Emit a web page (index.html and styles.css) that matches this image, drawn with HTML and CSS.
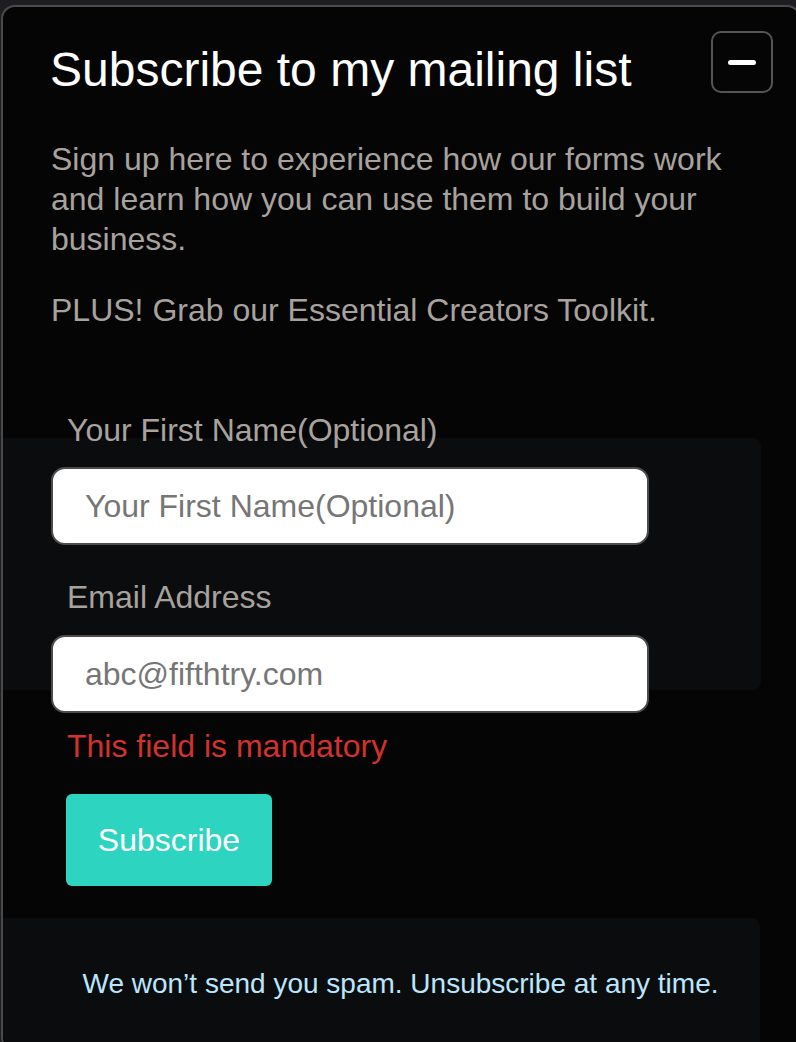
FILE: index.html
```html
<!DOCTYPE html>
<html lang="en">
<head>
<meta charset="utf-8">
<title>Subscribe</title>
<link rel="stylesheet" href="styles.css">
</head>
<body>
<section class="card">
  <header class="head">
    <h1 class="title">Subscribe to my mailing list</h1>
    <button class="close" type="button" aria-label="Minimize"><span class="bar"></span></button>
  </header>
  <p class="text">Sign up here to experience how our forms work and learn how you can use them to build your business.</p>
  <p class="text">PLUS! Grab our Essential Creators Toolkit.</p>
  <form class="form">
    <div class="fields">
      <label class="label" for="fname">Your First Name(Optional)</label>
      <input class="input" id="fname" type="text" placeholder="Your First Name(Optional)">
      <label class="label label-2" for="email">Email Address</label>
      <input class="input input-2" id="email" type="email" placeholder="abc@fifthtry.com">
    </div>
    <div class="error">This field is mandatory</div>
    <button class="submit" type="button">Subscribe</button>
  </form>
  <footer class="foot">We won’t send you spam. Unsubscribe at any time.</footer>
</section>
</body>
</html>
```

FILE: styles.css
```css
html, body {
  margin: 0;
  padding: 0;
  background: #1e1e20;
  overflow: hidden;
  height: 1042px;
}
* { box-sizing: border-box; }

.card {
  margin: 5px 0 0 1px;
  width: 800px;
  background: #050505;
  border: 2px solid #4a4a4a;
  border-radius: 14px;
  padding: 24px 0 0 47px;
  font-family: "Liberation Sans", Arial, Helvetica, sans-serif;
  overflow: hidden;
}

.head {
  display: flex;
  align-items: flex-start;
  justify-content: space-between;
  padding-right: 26px;
}
.title {
  margin: 9px 0 0 0;
  font-size: 48px;
  line-height: 60px;
  font-weight: 400;
  color: #ffffff;
}
.close {
  flex: none;
  width: 62px;
  height: 62px;
  border: 2px solid #555555;
  border-radius: 10px;
  background: transparent;
  display: flex;
  align-items: center;
  justify-content: center;
  padding: 0;
}
.bar {
  display: block;
  width: 28px;
  height: 5px;
  border-radius: 3px;
  background: #ffffff;
}

.text {
  margin: 39px 0 0 1px;
  font-size: 32px;
  line-height: 40px;
  color: #a8a29e;
  max-width: 690px;
}
.text + .text {
  margin-top: 31px;
}

.form {
  margin-top: 80px;
  padding-left: 1px;
}
.fields {
  position: relative;
  z-index: 0;
}
.fields::before {
  content: "";
  position: absolute;
  z-index: -1;
  top: 28px;
  left: -48px;
  width: 758px;
  height: 252px;
  background: #0a0c0e;
  border-radius: 0 8px 8px 0;
}
.label {
  display: block;
  padding-left: 16px;
  font-size: 32px;
  line-height: 40px;
  color: #a8a29e;
}
.label-2 {
  margin-top: 32px;
}
.input {
  display: block;
  margin: 17px 0 0 0;
  width: 598px;
  height: 78px;
  border: 2px solid #4d4d4d;
  border-radius: 14px;
  background: #ffffff;
  padding: 0 0 0 32px;
  font-family: "Liberation Sans", Arial, Helvetica, sans-serif;
  font-size: 32px;
  color: #222;
  outline: none;
}
.input-2 {
  margin-top: 18px;
}
.input::placeholder {
  color: #767676;
}
.error {
  margin-top: 13px;
  padding-left: 16px;
  font-size: 32px;
  line-height: 40px;
  color: #d2322d;
}
.submit {
  display: block;
  margin: 28px 0 0 15px;
  width: 206px;
  height: 92px;
  border: none;
  border-radius: 6px;
  background: #2dd4bf;
  color: #ffffff;
  font-family: "Liberation Sans", Arial, Helvetica, sans-serif;
  font-size: 32px;
  padding: 0;
}

.foot {
  position: relative;
  z-index: 0;
  margin: 32px 0 0 -48px;
  padding: 48px 0 47px 0;
  text-align: center;
  font-size: 28px;
  line-height: 36px;
  color: #bae6fd;
}
.foot::before {
  content: "";
  position: absolute;
  z-index: -1;
  top: 0;
  left: 0;
  width: 758px;
  height: 100%;
  background: #0a0c0e;
  border-radius: 0 8px 8px 0;
}
```
